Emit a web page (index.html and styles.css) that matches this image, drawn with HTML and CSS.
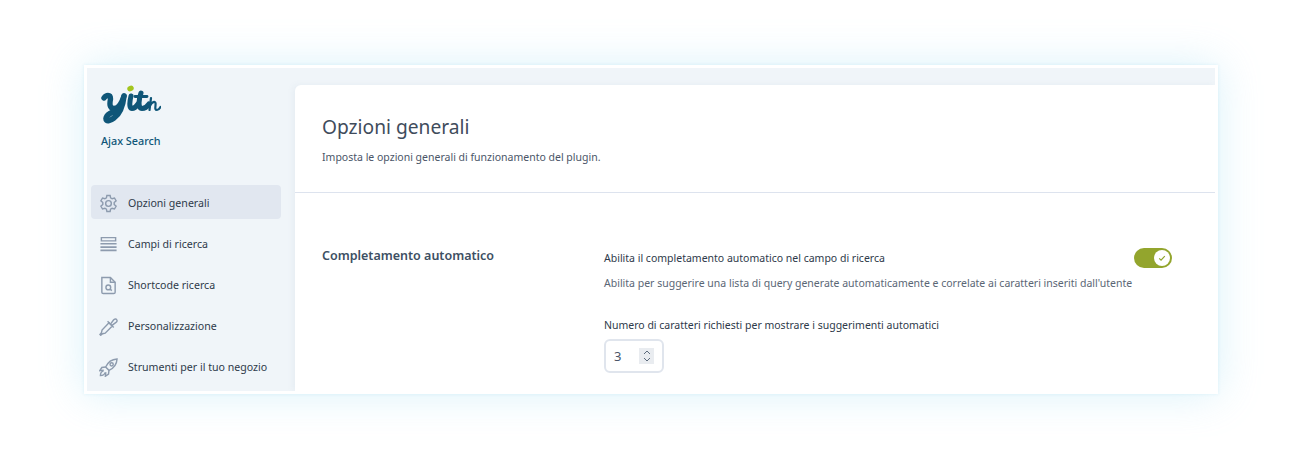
FILE: index.html
```html
<!DOCTYPE html>
<html lang="it">
<head>
<meta charset="utf-8">
<title>Opzioni generali</title>
<link rel="stylesheet" href="styles.css">
</head>
<body>
<div class="window">
  <aside class="sidebar">
    <div class="brand">
      <svg class="logo" viewBox="0 0 60 40" width="60" height="40" aria-label="yith">
        <g fill="none" stroke="#0f5678" stroke-linecap="round" stroke-linejoin="round">
          <path stroke-width="5.400" d="M3 13C5 10 9.500 9 9.500 14C8.500 19 8.500 23.500 13 23.500C18 23.500 21 17 23 11"/>
          <path stroke-width="5.600" d="M23 11C22 20 19 29 13 33C9 36 5 37 5 33.500C5.500 29 11 27 18 25"/>
          <path stroke-width="5" d="M30 11C29 15 27.500 23.500 31 23.500C33 23.500 35 22 37 19"/>
          <path stroke-width="5" d="M40 8C38 13 36.500 23.500 41 23.500C44 23.500 46 22 48 19"/>
          <path stroke-width="2.800" d="M34 11.500H46"/>
          <path stroke-width="2.200" d="M50 13C49.500 17 49 21 48.500 25M49.500 20C51 17 54 16 54.500 18C55 21 53 25 56 25C57.500 25 58.500 24 59.500 22"/>
        </g>
        <ellipse cx="29.500" cy="3.500" rx="3.300" ry="2.700" fill="#a3c51f" transform="rotate(-20 29.500 3.500)"/>
      </svg>
      <div class="brand-name">Ajax Search</div>
    </div>
    <nav class="menu">
      <a class="item active">
        <svg class="icon" viewBox="0 0 20 20"><path d="M8.300 1.500h3.400l.5 2.600 1.600.9 2.500-.8 1.700 2.900-2 1.800v2.200l2 1.800-1.700 2.900-2.500-.8-1.600.9-.5 2.600H8.300l-.5-2.600-1.600-.9-2.500.8-1.700-2.900 2-1.800V8.900l-2-1.800 1.700-2.900 2.500.8 1.600-.9z"/><circle cx="10" cy="10" r="3"/></svg>
        <span>Opzioni generali</span>
      </a>
      <a class="item">
        <svg class="icon" viewBox="0 0 20 20"><path d="M2.500 2.800h15v3.400h-15z"/><path class="thick" d="M1.500 9.200h17M1.500 12.700h17M1.500 16.200h17"/></svg>
        <span>Campi di ricerca</span>
      </a>
      <a class="item">
        <svg class="icon" viewBox="0 0 20 20"><path d="M3 1.500h9l5 5V17a1.500 1.500 0 0 1-1.500 1.500h-11A1.500 1.500 0 0 1 3 17z"/><path d="M12 1.500v5h5"/><circle cx="9.800" cy="12" r="2.500"/><path d="M11.700 13.800l1.800 1.600"/></svg>
        <span>Shortcode ricerca</span>
      </a>
      <a class="item">
        <svg class="icon" viewBox="0 0 20 20"><path d="M10.500 6l3.500 3.500-7.500 7.500-2.700.6-2 1.600-.8-.8 1.600-2 .6-2.700z"/><path d="M9 4.500L15.500 11"/><path d="M12.500 7l2.800-3.800c1-1.300 2.700-1.400 3.300-.5.700 1 .3 2.200-.7 3L14 8.500"/></svg>
        <span>Personalizzazione</span>
      </a>
      <a class="item">
        <svg class="icon" viewBox="0 0 20 20"><path d="M19 1c-5.500.3-9.500 3-12 8.500l3.500 3.500C16 10.500 18.700 6.500 19 1z"/><circle cx="13.300" cy="6.700" r="1.700"/><path d="M7 9.500l-4 .5-2.200 3.300 4.200-.5M10.500 13l-.5 4-3.300 2.200.5-4.200"/><path d="M4.800 13.500C2.800 14 1.500 16.300 1.500 18.500c2.200 0 4.500-1.300 5-3.300"/></svg>
        <span>Strumenti per il tuo negozio</span>
      </a>
    </nav>
  </aside>
  <main class="main">
    <header class="head">
      <h1>Opzioni generali</h1>
      <p>Imposta le opzioni generali di funzionamento del plugin.</p>
    </header>
    <section class="section">
      <h2>Completamento automatico</h2>
      <div class="fields">
        <div class="field-row">
          <div class="label">Abilita il completamento automatico nel campo di ricerca</div>
          <div class="toggle">
            <span class="knob"><svg viewBox="0 0 10 10" width="8" height="8"><path d="M1.500 5.500l2.300 2.200 4.700-5" fill="none" stroke="#8fa52c" stroke-width="1.500"/></svg></span>
          </div>
        </div>
        <p class="desc">Abilita per suggerire una lista di query generate automaticamente e correlate ai caratteri inseriti dall'utente</p>
        <div class="label second">Numero di caratteri richiesti per mostrare i suggerimenti automatici</div>
        <div class="number">
          <span>3</span>
          <span class="spin">
            <svg viewBox="0 0 10 16" width="10" height="16"><path d="M2 6l3-3 3 3M2 10l3 3 3-3" fill="none" stroke="#5d6b7c" stroke-width="1"/></svg>
          </span>
        </div>
      </div>
    </section>
  </main>
</div>
</body>
</html>
```
FILE: styles.css
```css
* { box-sizing: border-box; }
html, body { margin: 0; height: 460px; overflow: hidden; background: #fff; }
body { font-family: "Noto Sans", sans-serif; padding: 65px 82px 0 84px; }
.window {
  display: flex;
  width: 1134px;
  height: 329px;
  border: 3px solid #fff;
  background: #f0f5f9;
  box-shadow: 0 0 3px rgba(140, 215, 240, .25), 0 0 40px rgba(140, 215, 240, .32);
  overflow: hidden;
}
.sidebar { width: 208px; flex: none; padding: 17px 0 0 4px; }
.brand { padding-left: 10px; height: 100px; }
.logo { display: block; }
.brand-name { margin-top: 8px; font-size: 10.800px; font-weight: 500; line-height: 16px; color: #0f5678; }
.menu { display: flex; flex-direction: column; gap: 7px; width: 190px; }
.item { display: flex; align-items: center; height: 34px; padding: 2px 0 0 8px; border-radius: 4px; font-size: 10.600px; color: #2e3a4a; }
.item.active { background: #e1e7f0; }
.icon { width: 19px; height: 19px; margin-right: 10px; fill: none; stroke: #8d9bae; stroke-width: 1.500; flex: none; }
.icon .thick { stroke-width: 1.800; }
.main { flex: 1; margin-top: 17px; background: #fff; border-top-left-radius: 6px; box-shadow: -2px 0 6px rgba(120, 140, 170, .08); }
.head { height: 108px; padding: 28px 27px 0; border-bottom: 1px solid #dde3ee; }
h1 { margin: 0; font-size: 19.200px; font-weight: 400; line-height: 28px; color: #3f4c5c; }
.head p { margin: 9px 0 0; font-size: 10.500px; line-height: 15px; color: #4a5568; }
.section { display: flex; padding: 54px 43px 0 27px; }
h2 { width: 282px; flex: none; margin: 0; font-size: 12.500px; font-weight: 600; line-height: 18px; color: #3d4f63; }
.fields { flex: 1; padding-top: 1px; }
.field-row { display: flex; justify-content: space-between; align-items: center; height: 20px; }
.label { font-size: 10.500px; line-height: 15px; color: #2e3a4a; padding-top: 1px; }
.desc { margin: 8px 0 0; font-size: 10.500px; line-height: 15px; color: #5a6675; }
.second { margin-top: 26px; }
.toggle { display: flex; justify-content: flex-end; align-items: center; width: 38px; height: 20px; padding-right: 2px; border-radius: 10px; background: #93a52d; }
.knob { display: flex; align-items: center; justify-content: center; width: 16px; height: 16px; border-radius: 50%; background: #fff; }
.number { display: flex; align-items: center; justify-content: space-between; width: 60px; height: 34px; margin-top: 6px; padding: 0 8px; border: 2px solid #e0e5ed; border-radius: 6px; font-size: 13px; color: #4a5568; }
.spin { display: flex; align-items: center; justify-content: center; width: 15px; height: 16px; background: #e9ecf0; }
```
